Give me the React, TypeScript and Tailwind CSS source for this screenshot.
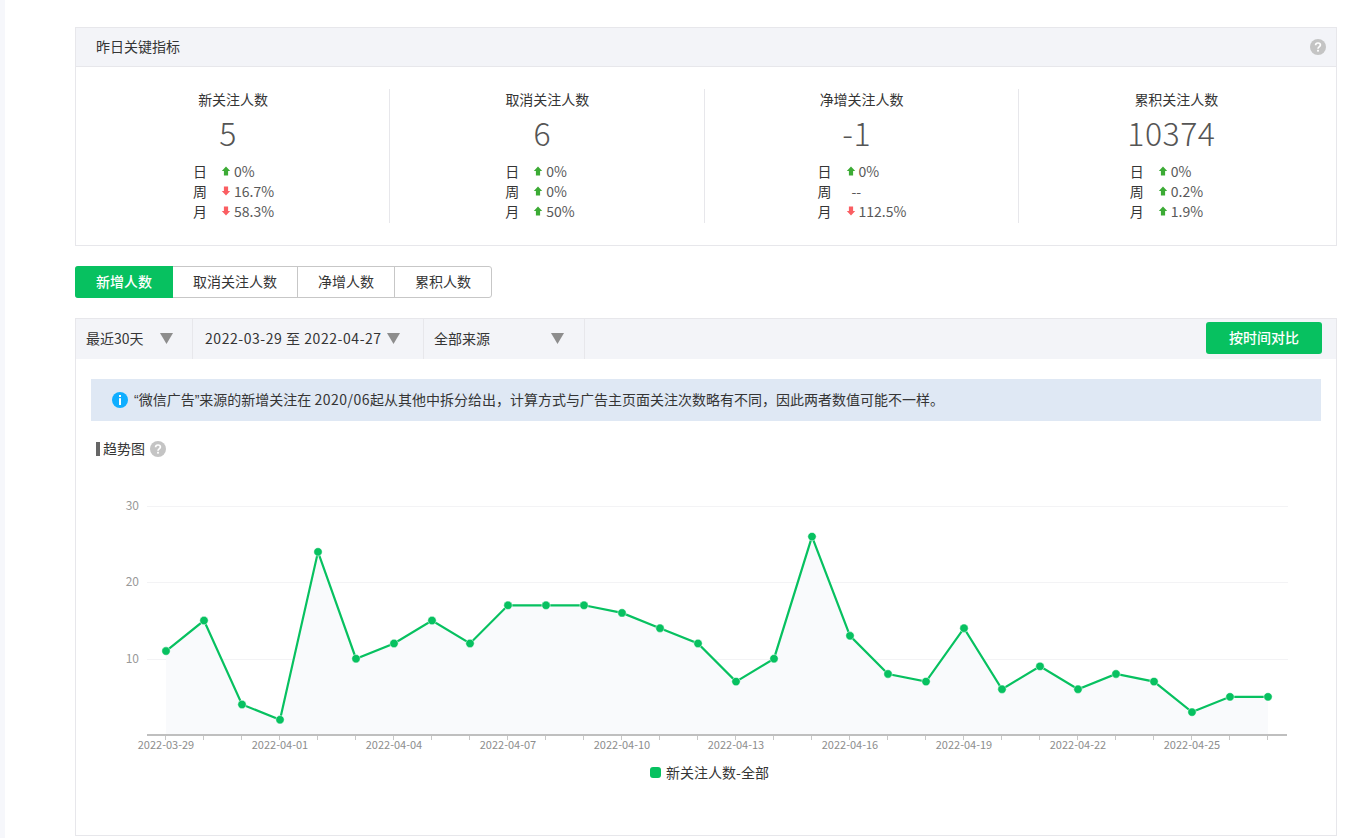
import React from "react";

const values = [11, 15, 4, 2, 24, 10, 12, 15, 12, 17, 17, 17, 16, 14, 12, 7, 10, 26, 13, 8, 7, 14, 6, 9, 6, 8, 7, 3, 5, 5];
const dateLabels = ["2022-03-29", "2022-04-01", "2022-04-04", "2022-04-07", "2022-04-10", "2022-04-13", "2022-04-16", "2022-04-19", "2022-04-22", "2022-04-25"];

type Row = { label: string; dir: "up" | "down" | "none"; value: string };

const stats: { title: string; num: string; listClass: string; rows: Row[]; divider: boolean }[] = [
  {
    title: "新关注人数",
    num: "5",
    listClass: "pl-[117px]",
    divider: true,
    rows: [
      { label: "日", dir: "up", value: "0%" },
      { label: "周", dir: "down", value: "16.7%" },
      { label: "月", dir: "down", value: "58.3%" },
    ],
  },
  {
    title: "取消关注人数",
    num: "6",
    listClass: "pl-[115px]",
    divider: true,
    rows: [
      { label: "日", dir: "up", value: "0%" },
      { label: "周", dir: "up", value: "0%" },
      { label: "月", dir: "up", value: "50%" },
    ],
  },
  {
    title: "净增关注人数",
    num: "-1",
    listClass: "pl-[113px]",
    divider: true,
    rows: [
      { label: "日", dir: "up", value: "0%" },
      { label: "周", dir: "none", value: "--" },
      { label: "月", dir: "down", value: "112.5%" },
    ],
  },
  {
    title: "累积关注人数",
    num: "10374",
    listClass: "pl-[111px]",
    divider: false,
    rows: [
      { label: "日", dir: "up", value: "0%" },
      { label: "周", dir: "up", value: "0.2%" },
      { label: "月", dir: "up", value: "1.9%" },
    ],
  },
];

const Arrow = ({ dir }: { dir: "up" | "down" }) => (
  <svg width="10" height="10" viewBox="0 0 10 10" className="shrink-0">
    {dir === "up" ? (
      <path d="M5 .5 9.2 5H7.1V9.4H2.9V5H.8Z" fill="#3cab35" />
    ) : (
      <path d="M5 9.5 9.2 5H7.1V.6H2.9V5H.8Z" fill="#fa5e62" />
    )}
  </svg>
);

const Help = () => (
  <svg width="16" height="16" viewBox="0 0 16 16" className="shrink-0">
    <circle cx="8" cy="8" r="8" fill="#c4c4c4" />
    <path d="M5.6 6.2C5.6 4.8 6.7 4 8 4s2.4.8 2.4 2.1c0 1.8-2.4 1.8-2.4 3.6" fill="none" stroke="#fff" strokeWidth="1.7" />
    <rect x="7.1" y="10.8" width="1.8" height="1.8" fill="#fff" />
  </svg>
);

const Caret = () => (
  <svg width="13" height="11" viewBox="0 0 13 11" className="shrink-0">
    <path d="M0 0H13L6.5 11Z" fill="#8d8d8d" />
  </svg>
);

const Chart = () => {
  const x = (i: number) => 90 + i * 38;
  const y = (v: number) => 265 - v * 7.63;
  const line = values.map((v, i) => `${x(i)},${y(v)}`).join(" ");
  return (
    <svg width="1260" height="290" viewBox="0 0 1260 290" className="block">
      {[10, 20, 30].map((v) => (
        <g key={v}>
          <line x1="71" x2="1212" y1={Math.round(y(v)) + 0.5} y2={Math.round(y(v)) + 0.5} stroke="#f3f3f5" />
          <text x="63" y={y(v) + 4} textAnchor="end" fontSize="12" fill="#999">
            {v}
          </text>
        </g>
      ))}
      <polygon points={`90,265 ${line} ${x(29)},265`} fill="#f9fafc" />
      <polyline points={line} fill="none" stroke="#07c160" strokeWidth="2.2" />
      {values.map((v, i) => (
        <circle key={i} cx={x(i)} cy={y(v)} r="4.2" fill="#07c160" stroke="#fff" strokeWidth="0.5" />
      ))}
      <rect x="71" y="264" width="1140" height="2" fill="#bfbfbf" />
      {values.map((_, i) => (
        <line key={i} x1={x(i) - 0.5} x2={x(i) - 0.5} y1="266" y2="270" stroke="#c7c7c7" />
      ))}
      {dateLabels.map((d, i) => (
        <text key={d} x={x(i * 3)} y="279" textAnchor="middle" fontSize="11" fill="#8d8d8d">
          {d}
        </text>
      ))}
    </svg>
  );
};

export default function App() {
  return (
    <div className="flex h-[838px] w-[1364px] overflow-hidden bg-white font-['Noto_Sans_CJK_SC','Microsoft_YaHei',sans-serif] text-sm text-[#353535]">
      <div className="w-[5px] shrink-0 bg-[#f6f7fb]" />
      <main className="w-[1262px] ml-[70px] pt-[27px]">
        <section className="h-[219px] border border-[#e7e7eb]">
          <div className="flex h-[39px] items-center justify-between border-b border-[#e7e7eb] bg-[#f3f4f8] pl-5 pr-[10px]">
            <span className="pb-[2px]">昨日关键指标</span>
            <Help />
          </div>
          <div className="grid grid-cols-4 pr-[3px] pt-[22px]">
            {stats.map((s) => (
              <div key={s.title} className={`h-[134px] ${s.divider ? "border-r border-[#e7e7eb]" : ""}`}>
                <div className="h-[21px] pl-[1px] text-center leading-[20px]">{s.title}</div>
                <div className="h-[46px] pr-[9px] text-center text-[32px] font-light leading-[44px] tracking-[0.5px] text-[#555]">{s.num}</div>
                <ul className={`mt-[5px] ${s.listClass}`}>
                  {s.rows.map((r) => (
                    <li key={r.label} className="flex h-5 items-center leading-5">
                      <span className="w-[28px]">{r.label}</span>
                      {r.dir === "none" ? (
                        <span className="w-[3px]" />
                      ) : (
                        <Arrow dir={r.dir} />
                      )}
                      <span className="ml-[3px] text-[#595959]">{r.value}</span>
                    </li>
                  ))}
                </ul>
              </div>
            ))}
          </div>
        </section>

        <div className="mt-5 flex h-8 w-[417px] rounded-[3px] border border-[#c7c7c7]">
          <div className="-my-px -ml-px flex w-[98px] items-center justify-center rounded-l-[3px] bg-[#07c160] pb-[2px] font-medium text-white">新增人数</div>
          <div className="flex w-[125px] items-center justify-center border-r border-[#c7c7c7] pb-[2px]">取消关注人数</div>
          <div className="flex w-[97px] items-center justify-center border-r border-[#c7c7c7] pb-[2px]">净增人数</div>
          <div className="flex flex-1 items-center justify-center pb-[2px]">累积人数</div>
        </div>

        <section className="mt-5 h-[518px] border border-[#e7e7eb]">
          <div className="flex h-10 items-center justify-between bg-[#f3f4f8] pr-[14px]">
            <div className="flex h-full">
              <div className="flex w-[117px] items-center border-r border-[#e7e7eb] pb-[2px] pl-[10px]">
                <span className="w-[74px]">最近30天</span>
                <Caret />
              </div>
              <div className="flex w-[231px] items-center border-r border-[#e7e7eb] pb-[2px] pl-3">
                <span className="w-[182px] whitespace-nowrap tracking-[0.55px]">2022-03-29 至 2022-04-27</span>
                <Caret />
              </div>
              <div className="flex w-[161px] items-center border-r border-[#e7e7eb] pb-[2px] pl-[10px]">
                <span className="w-[117px]">全部来源</span>
                <Caret />
              </div>
            </div>
            <button className="mb-[2px] h-8 w-[116px] rounded-[3px] bg-[#07c160] pb-[2px] font-medium text-white">按时间对比</button>
          </div>

          <div className="mx-[15px] mt-5 flex h-[42px] items-center bg-[#dfe8f4] pl-[21px]">
            <svg width="16" height="16" viewBox="0 0 16 16" className="mr-[6px] shrink-0">
              <circle cx="8" cy="8" r="8" fill="#10aeff" />
              <rect x="7" y="3" width="2" height="2" fill="#fff" />
              <rect x="7" y="6.2" width="2" height="6.8" fill="#fff" />
            </svg>
            <span className="whitespace-nowrap pb-[2px]">
              <span className="font-['Liberation_Sans']">“</span>微信广告<span className="font-['Liberation_Sans']">”</span>来源的新增关注在 <span className="tracking-[0.5px]">2020/06</span>起从其他中拆分给出，计算方式与广告主页面关注次数略有不同，因此两者数值可能不一样。
            </span>
          </div>

          <div className="mt-[20px] flex h-4 items-center pl-5">
            <span className="mr-[3px] h-[14px] w-1 bg-[#666]" />
            <span className="mr-[5px] pb-[2px]">趋势图</span>
            <Help />
          </div>

          <div className="mt-[13px]">
            <Chart />
          </div>

          <div className="mt-[2px] flex items-center justify-center pl-[7px]">
            <span className="mr-[5px] h-[11px] w-[11px] rounded-[3px] bg-[#07c160]" />
            <span>新关注人数-全部</span>
          </div>
        </section>
      </main>
    </div>
  );
}
